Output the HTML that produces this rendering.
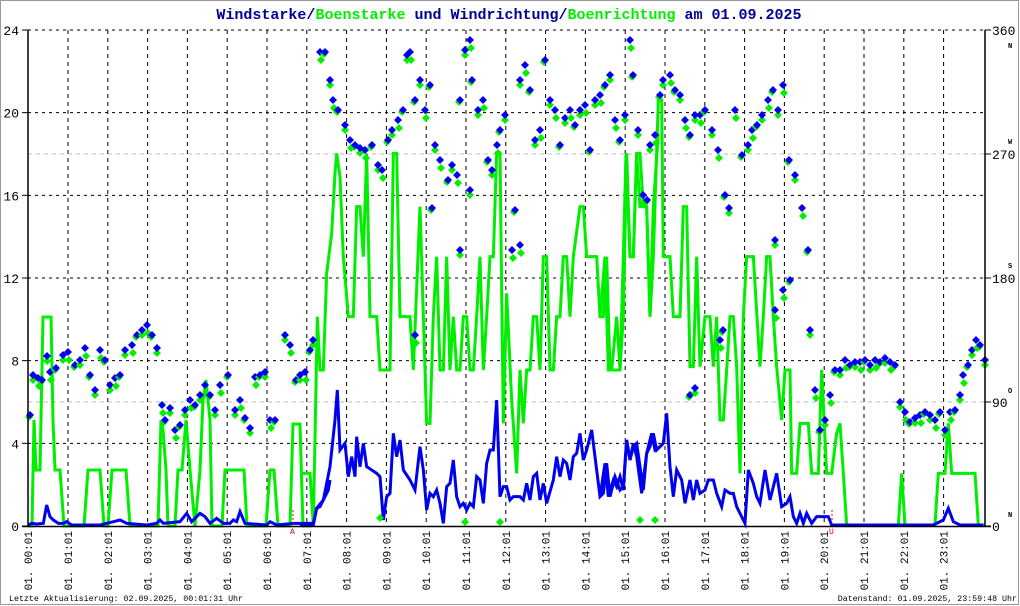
<!DOCTYPE html>
<html><head><meta charset="utf-8"><style>
html,body{margin:0;padding:0;background:#fff;}
svg{display:block;}
text{font-family:"Liberation Mono","DejaVu Sans Mono",monospace;}
</style></head><body>
<svg id="s" width="1020" height="606" viewBox="0 0 1020 606" xmlns="http://www.w3.org/2000/svg">
<rect x="0.5" y="0.5" width="1018" height="604" fill="#fff" stroke="#999"/>
<text x="509" y="19" text-anchor="middle" font-size="15" font-weight="bold" fill="#000099"><tspan>Windstarke/</tspan><tspan fill="#00ee00">Boenstarke</tspan><tspan> und Windrichtung/</tspan><tspan fill="#00ee00">Boenrichtung</tspan><tspan> am 01.09.2025</tspan></text>
<g id="grid"></g>
<!-- gray dotted at 90 / 270 -->
<line x1="28" y1="154" x2="985" y2="154" stroke="#bbb" stroke-dasharray="4,4"/>
<line x1="28" y1="402" x2="985" y2="402" stroke="#bbb" stroke-dasharray="4,4"/>
<!-- green gust early -->
<polyline fill="none" stroke="#00ee00" stroke-width="3" points="28,526 32,526 34,420 36,470 40,470 43,317 51,317 53,420 55,470 60,470 64,526 84,526 88,470 100,470 104,526 108,526 112,470 126,470 130,526 158,526 161,420 163,430 166,470 168,526 175,526 178,470 182,470 186,420 190,470 195,526 200,470 203,400 206,380 210,420 212,526 222,526 225,470 244,470 247,526 266,526 270,470 274,470 278,526 290,526 293,424 300,424 303,526 312,526"/>
<g transform="translate(300,100) scale(0.33333)">
<polyline fill="none" stroke="#00ee00" stroke-width="9" points="0,1120 30,1120 40,1275 52,650 60,810 70,810 80,520 95,400 105,220 110,160 120,230 130,470 145,650 160,650 170,320 180,320 190,470 200,160 210,650 230,650 240,810 270,810 280,160 290,160 300,650 330,650 340,810 360,320 380,970 390,970 400,650 410,470 420,810 430,810 440,470 450,810 460,650 470,810 480,810 490,650 500,650 510,810 520,810 530,650 540,470 550,810 560,650 570,470 580,470 590,160 600,160 610,970 620,580 635,900 650,1120 660,810 670,970 680,810 690,810 700,650 710,650 720,810 730,470 740,470 750,810 760,810 770,650 780,650 790,470 800,470 810,650 820,470 840,320 850,320 860,470 890,470 900,650 910,650 920,470 930,810 960,810 970,650 980,160 990,470 1000,470 1010,160 1020,160 1030,320 1040,320 1050,650 1060,320 1075,100"/>
<polyline fill="none" stroke="#0000ee" stroke-width="9" points="0,1275 40,1275 50,1225 70,1200 90,1100 105,960 112,870 120,1050 135,1030 145,1130 155,1070 165,1130 170,1010 180,1100 190,1030 200,1100 215,1110 230,1120 240,1130 250,1260 260,1190 270,1180 280,1000 290,1070 300,1020 310,1110 330,1140 345,1170 360,1040 370,1110 380,1230 390,1180 400,1190 410,1170 420,1210 430,1270 440,1160 450,1150 460,1080 470,1190 480,1220 490,1210 500,1230 510,1210 520,1220 530,1130 540,1140 550,1210 560,1090 570,1050 580,1050 590,900 600,1190 610,1160 620,1160 630,1200 640,1190 660,1190 670,1200 680,1150 690,1200 700,1130 710,1120 720,1200 730,1150 740,1210 760,1140 770,1070 780,1130 790,1080 800,1090 810,1140 820,1070 830,1060 840,1000 850,1080 860,1050 875,990 885,1070 900,1190 910,1180 920,1090 930,1190 945,1130 960,1170 970,1160 980,1020 990,1080 1000,1040 1010,1030 1020,1100 1030,1170 1040,1060 1050,1040 1060,1000 1070,1050 1080,1040"/>
</g>
<g transform="translate(600,100) scale(0.33333)">
<polyline fill="none" stroke="#00ee00" stroke-width="9" points="0,650 15,470 25,810 35,810 50,650 60,810 70,470 78,160 90,470 100,470 110,160 120,320 140,320 150,650 160,470 175,0 185,0 190,470 210,470 220,650 240,650 250,320 260,320 270,800 280,800 290,470 300,800 315,650 330,650 340,800 350,650 360,960 370,960 380,810 390,650 400,650 410,800 420,1120 430,650 440,470 460,470 480,800 490,650 500,470 510,470 520,650 530,800 545,960 555,810 570,810 575,1120 590,1120 600,970 625,970 635,1120 655,1120 665,810 680,1120 695,1120 710,1000 720,970 730,1120 740,1275 895,1275 905,1120 915,1275 1005,1275 1015,1120 1035,1120 1045,970 1055,1120 1125,1120 1135,1275 1155,1275"/>
<polyline fill="none" stroke="#0000ee" stroke-width="9" points="0,1190 15,1090 25,1190 40,1140 50,1160 60,1130 70,1170 80,1020 90,1080 100,1030 110,1070 125,1180 140,1060 155,1000 165,1050 180,1040 190,1030 200,940 210,1100 220,1190 230,1110 245,1140 255,1210 270,1140 280,1200 290,1140 300,1180 315,1170 325,1140 340,1140 350,1180 365,1220 375,1170 390,1180 400,1180 410,1220 425,1250 435,1270 445,1110 460,1150 470,1190 480,1210 495,1110 510,1200 520,1160 530,1120 545,1220 560,1210 570,1190 580,1250 590,1270 600,1240 610,1270 620,1240 635,1270 650,1250 670,1250 685,1250 695,1275 1000,1275 1030,1260 1045,1225 1060,1265 1080,1275 1150,1275"/>
</g>
<g transform="translate(0,480) scale(0.33333)">
<polyline fill="none" stroke="#0000ee" stroke-width="9" points="85,135 95,130 110,132 130,130 140,75 150,110 160,120 175,130 190,130 200,125 215,135 300,135 320,130 340,125 360,120 380,130 440,135 470,130 480,120 490,130 540,125 560,100 575,125 600,100 615,110 630,130 650,115 670,130 690,130 700,120 710,125 720,95 735,130 800,135 810,125 830,135 880,130 940,130 950,85 960,80 985,30 990,0"/>
</g>
<g id="dots"></g>
<!-- axes -->
<line x1="28" y1="30" x2="28" y2="527" stroke="#000" stroke-width="1.5"/>
<line x1="985" y1="30" x2="985" y2="527" stroke="#000" stroke-width="1.5"/>
<line x1="22" y1="526.5" x2="991" y2="526.5" stroke="#000" stroke-width="1.5"/>
<g id="labels" font-size="13" fill="#000"></g>
<g font-size="7" font-weight="bold" fill="#000">
<text x="1008" y="48">N</text><text x="1008" y="144">W</text><text x="1008" y="268">S</text><text x="1008" y="393">O</text><text x="1008" y="517">N</text>
</g>
<line x1="293" y1="510" x2="293" y2="524" stroke="#e00" stroke-dasharray="2,2"/>
<text x="290" y="534" font-size="8" fill="#e00">A</text>
<line x1="832" y1="510" x2="832" y2="524" stroke="#e00" stroke-dasharray="2,2"/>
<text x="829" y="534" font-size="8" fill="#e00">U</text>
<text x="9" y="601" font-size="8.3" fill="#000">Letzte Aktualisierung: 02.09.2025, 00:01:31 Uhr</text>
<text x="1017" y="601" font-size="8.3" fill="#000" text-anchor="end">Datenstand: 01.09.2025, 23:59:48 Uhr</text>
</svg>
<script>
var NS="http://www.w3.org/2000/svg";
function el(p,t,a,txt){var e=document.createElementNS(NS,t);for(var k in a)e.setAttribute(k,a[k]);if(txt)e.textContent=txt;p.appendChild(e);return e;}
var g=document.getElementById('grid'),L=document.getElementById('labels'),D=document.getElementById('dots');
function X(h){return 28.2+39.8*h;}
for(var h=1;h<24;h++){el(g,'line',{x1:X(h),y1:30,x2:X(h),y2:526,stroke:'#000','stroke-dasharray':'4,4'});}
[4,8,12,16,20,24].forEach(function(v){var y=526-v*20.667;el(g,'line',{x1:28,y1:y,x2:985,y2:y,stroke:'#000','stroke-dasharray':'3,4'});});
for(var v=0;v<=24;v+=4){var y=526-v*20.667;el(L,'text',{x:19,y:y+5,'text-anchor':'end'},String(v));el(L,'line',{x1:22,y1:y,x2:28,y2:y,stroke:'#000'});}
[[0,526],[90,402],[180,278],[270,154],[360,30]].forEach(function(a){el(L,'text',{x:992,y:a[1]+5},String(a[0]));el(L,'line',{x1:985,y1:a[1],x2:991,y2:a[1],stroke:'#000'});});
for(var h=0;h<24;h++){var hh=(h<10?'0':'')+h;var cx=X(h)+4;el(L,'text',{x:0,y:0,'font-size':'11','text-anchor':'end',transform:'translate('+cx+',531) rotate(-90)'},'01. '+hh+':01');}
var P=[[30,415],[33,375],[38,378],[42,380],[47,356],[50,372],[56,368],[63,355],[68,352],[75,365],[80,360],[85,348],[90,375],[95,390],[100,350],[105,360],[110,385],[115,378],[120,375],[125,350],[132,345],[137,335],[142,330],[147,325],[152,335],[157,348],[162,405],[165,420],[170,408],[175,430],[180,425],[185,410],[190,400],[195,405],[200,395],[205,385],[210,395],[215,410],[220,385],[228,375],[235,410],[240,400],[245,418],[250,428],[255,377],[260,375],[265,372],[270,420],[275,420],[285,335],[290,345],[296,380],[300,375],[305,372],[310,350],[313,340],[320,52],[325,52],[330,80],[333,100],[338,110],[345,125],[350,140],[355,145],[360,148],[365,150],[372,145],[378,165],[382,170],[388,140],[392,130],[398,120],[403,110],[407,55],[410,52],[415,100],[420,80],[425,110],[430,85],[435,145],[440,160],[448,180],[452,165],[457,175],[460,100],[465,50],[470,40],[472,80],[478,110],[483,100],[488,160],[492,170],[497,145],[500,130],[505,115],[512,250],[515,210],[520,80],[525,65],[530,90],[535,140],[540,130],[545,60],[550,100],[555,110],[560,145],[565,118],[570,110],[575,125],[580,110],[585,105],[590,150],[595,100],[600,95],[605,85],[610,75],[615,120],[620,140],[625,115],[630,40],[633,75],[638,130],[643,195],[647,200],[650,145],[655,135],[660,95],[663,80],[670,75],[675,90],[680,95],[685,120],[690,135],[695,115],[700,115],[705,110],[712,130],[718,150],[725,195],[729,208],[735,110],[742,155],[748,145],[752,130],[757,125],[762,115],[768,100],[773,90],[778,110],[783,85],[789,160],[795,175],[802,208],[808,250],[810,330],[815,390],[820,430],[825,420],[830,395],[835,370],[840,370],[845,360],[850,365],[855,362],[860,362],[865,360],[870,365],[875,360],[880,362],[885,358],[890,362],[895,365],[900,402],[905,412],[910,422],[915,418],[920,415],[925,412],[930,415],[935,420],[940,412],[945,430],[950,412],[955,410],[960,395],[963,375],[968,365],[972,350],[976,340],[980,345],[985,360],[783,290],[790,280],[775,240],[775,310],[690,395],[695,388],[720,340],[723,330],[460,250],[415,335],[432,208],[470,190],[520,245]];
var Q=[[640,520],[655,520],[500,522],[465,522],[380,518]];
function dm(x,y,c){el(D,'path',{d:'M'+x+' '+(y-4)+'L'+(x+4)+' '+y+'L'+x+' '+(y+4)+'L'+(x-4)+' '+y+'Z',fill:c});}
P.forEach(function(p,i){var o=(i%3)-1;dm(p[0]+o,p[1]+5+o*3,'#00ee00');dm(p[0],p[1],'#0000ee');});
Q.forEach(function(p){dm(p[0],p[1],'#00ee00');});
</script>
</body></html>
